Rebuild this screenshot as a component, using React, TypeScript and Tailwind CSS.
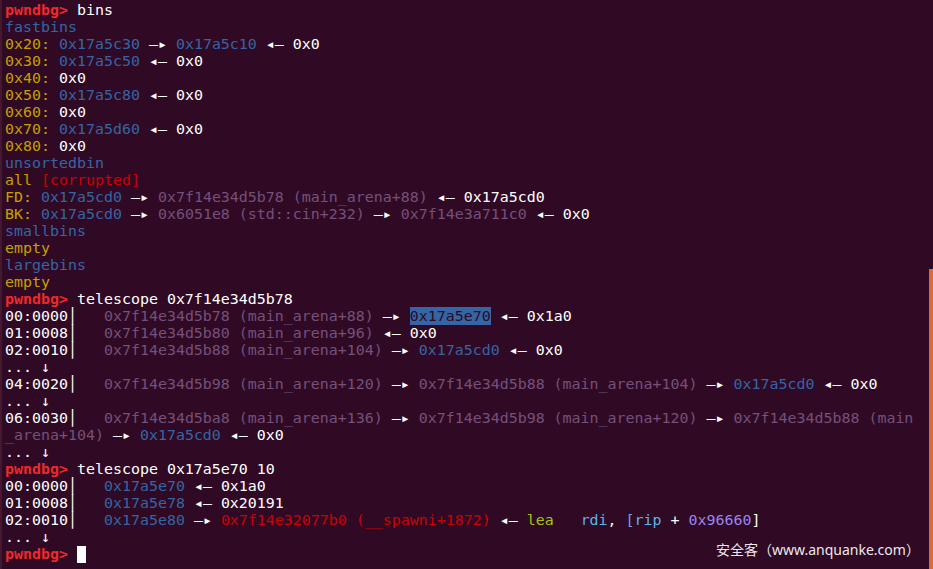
import React from "react";

type Seg = [string, string];

const R = "text-[#ef2929] font-bold";
const W = "text-white";
const B = "text-[#3465a4]";
const Y = "text-[#c4a000]";
const P = "text-[#75507b]";
const D = "text-[#cc0000]";
const HL = "bg-[#3465a4] text-[#300a24]";

const TO = " —▸ ";
const FROM = " ◂— ";

const lines: Seg[][] = [
  [["pwndbg> ", R], ["bins", W]],
  [["fastbins", B]],
  [["0x20: ", Y], ["0x17a5c30", B], [TO, W], ["0x17a5c10", B], [FROM, W], ["0x0", W]],
  [["0x30: ", Y], ["0x17a5c50", B], [FROM, W], ["0x0", W]],
  [["0x40: ", Y], ["0x0", W]],
  [["0x50: ", Y], ["0x17a5c80", B], [FROM, W], ["0x0", W]],
  [["0x60: ", Y], ["0x0", W]],
  [["0x70: ", Y], ["0x17a5d60", B], [FROM, W], ["0x0", W]],
  [["0x80: ", Y], ["0x0", W]],
  [["unsortedbin", B]],
  [["all ", Y], ["[corrupted]", D]],
  [["FD: ", Y], ["0x17a5cd0", B], [TO, W], ["0x7f14e34d5b78 (main_arena+88)", P], [FROM, W], ["0x17a5cd0", W]],
  [["BK: ", Y], ["0x17a5cd0", B], [TO, W], ["0x6051e8 (std::cin+232)", P], [TO, W], ["0x7f14e3a711c0", P], [FROM, W], ["0x0", W]],
  [["smallbins", B]],
  [["empty", Y]],
  [["largebins", B]],
  [["empty", Y]],
  [["pwndbg> ", R], ["telescope 0x7f14e34d5b78", W]],
  [["00:0000│   ", W], ["0x7f14e34d5b78 (main_arena+88)", P], [TO, W], ["0x17a5e70", HL], [FROM, W], ["0x1a0", W]],
  [["01:0008│   ", W], ["0x7f14e34d5b80 (main_arena+96)", P], [FROM, W], ["0x0", W]],
  [["02:0010│   ", W], ["0x7f14e34d5b88 (main_arena+104)", P], [TO, W], ["0x17a5cd0", B], [FROM, W], ["0x0", W]],
  [["... ↓", W]],
  [["04:0020│   ", W], ["0x7f14e34d5b98 (main_arena+120)", P], [TO, W], ["0x7f14e34d5b88 (main_arena+104)", P], [TO, W], ["0x17a5cd0", B], [FROM, W], ["0x0", W]],
  [["... ↓", W]],
  [["06:0030│   ", W], ["0x7f14e34d5ba8 (main_arena+136)", P], [TO, W], ["0x7f14e34d5b98 (main_arena+120)", P], [TO, W], ["0x7f14e34d5b88 (main", P]],
  [["_arena+104)", P], [TO, W], ["0x17a5cd0", B], [FROM, W], ["0x0", W]],
  [["... ↓", W]],
  [["pwndbg> ", R], ["telescope 0x17a5e70 10", W]],
  [["00:0000│   ", W], ["0x17a5e70", B], [FROM, W], ["0x1a0", W]],
  [["01:0008│   ", W], ["0x17a5e78", B], [FROM, W], ["0x20191", W]],
  [
    ["02:0010│   ", W], ["0x17a5e80", B], [TO, W], ["0x7f14e32077b0 (__spawni+1872)", D], [FROM, W],
    ["lea", "text-[#a0c410]"], ["   ", W], ["rdi", "text-[#5ab4e8]"], [", ", W], ["[", "text-[#6aa6e0]"],
    ["rip", "text-[#5ab4e8]"], [" + ", W], ["0x96660", "text-[#9a86ee]"], ["]", W],
  ],
  [["... ↓", W]],
];

const Line = ({ segs }: { segs: Seg[] }) => (
  <div className="h-[17px] whitespace-pre">
    {segs.map(([t, c], i) => (
      <span key={i} className={c}>
        {t}
      </span>
    ))}
  </div>
);

export default function App() {
  return (
    <div className="relative flex w-[933px] h-[569px] overflow-hidden bg-[#300a24]">
      <div className="w-[2px] bg-[#44182f]" />
      <div className="flex-1 pl-[3px] pt-[2px] font-['DejaVu_Sans_Mono',monospace] text-[14.95px] leading-[17px]">
        {lines.map((segs, i) => (
          <Line key={i} segs={segs} />
        ))}
        <div className="h-[17px] whitespace-pre flex items-start">
          <span className={R}>{"pwndbg> "}</span>
          <span className="inline-block w-[9px] h-[17px] bg-white" />
        </div>
      </div>
      <div className="flex w-[4px] flex-col">
        <div className="h-[269px]" />
        <div className="flex-1 bg-[#dc6b3a]" />
      </div>
      <div className="absolute left-[716px] top-[540px] whitespace-nowrap text-[14px] leading-[20px] text-[#ece8ea] font-['Noto_Sans','Noto_Sans_CJK_SC',sans-serif]">
        安全客（www.anquanke.com）
      </div>
    </div>
  );
}
